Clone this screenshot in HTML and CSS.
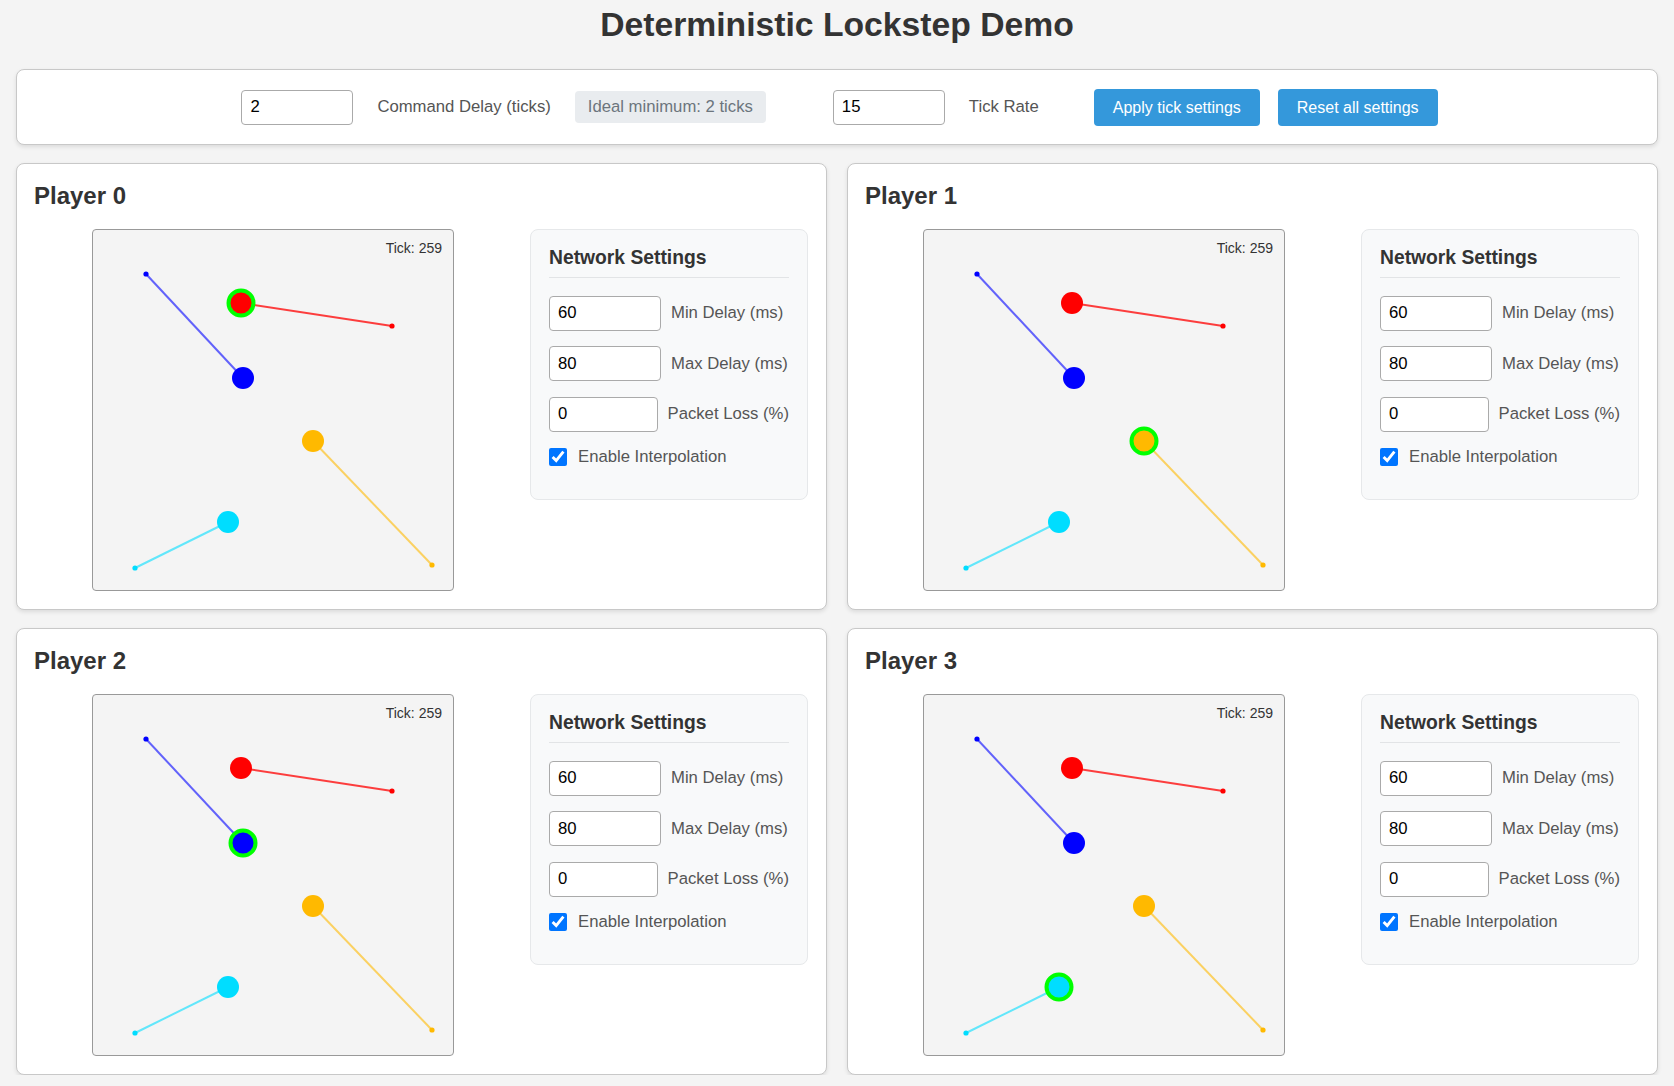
FILE: index.html
```html
<!DOCTYPE html>
<html lang="en">
<head>
<meta charset="utf-8">
<title>Deterministic Lockstep Demo</title>
<link rel="stylesheet" href="styles.css">
</head>
<body>
<h1 class="title">Deterministic Lockstep Demo</h1>

<div class="toolbar">
  <div class="group g1">
    <input class="field" type="text" value="2">
    <span class="lbl">Command Delay (ticks)</span>
    <span class="badge">Ideal minimum: 2 ticks</span>
  </div>
  <div class="group g2">
    <input class="field" type="text" value="15">
    <span class="lbl">Tick Rate</span>
  </div>
  <div class="group g3">
    <button class="btn">Apply tick settings</button>
    <button class="btn">Reset all settings</button>
  </div>
</div>

<div class="grid">
  <!-- Player 0 -->
  <section class="card">
    <h2 class="card-title">Player 0</h2>
    <div class="card-body">
      <div class="canvas-col">
        <svg class="world" width="360" height="360" viewBox="0 0 360 360">
          <line x1="53" y1="44" x2="150" y2="148" stroke="#0000ff" stroke-opacity="0.6" stroke-width="2"/>
          <line x1="299" y1="96" x2="148" y2="73" stroke="#ff0000" stroke-opacity="0.75" stroke-width="2"/>
          <line x1="339" y1="335" x2="220" y2="211" stroke="#ffb900" stroke-opacity="0.6" stroke-width="2"/>
          <line x1="42" y1="338" x2="135" y2="292" stroke="#00ddff" stroke-opacity="0.6" stroke-width="2"/>
          <circle cx="53" cy="44" r="2.6" fill="#0000ff"/>
          <circle cx="299" cy="96" r="2.6" fill="#ff0000"/>
          <circle cx="339" cy="335" r="2.6" fill="#ffb900"/>
          <circle cx="42" cy="338" r="2.6" fill="#00ddff"/>
          <circle cx="150" cy="148" r="11" fill="#0000ff"/>
          <circle cx="148" cy="73" r="12.5" fill="#ff0000" stroke="#00ff00" stroke-width="4"/>
          <circle cx="220" cy="211" r="11" fill="#ffb900"/>
          <circle cx="135" cy="292" r="11" fill="#00ddff"/>
          <text class="tick" x="349" y="23" text-anchor="end">Tick: 259</text>
        </svg>
      </div>
      <div class="net">
        <h3 class="net-title">Network Settings</h3>
        <div class="row"><input class="field" type="text" value="60"><span class="lbl">Min Delay (ms)</span></div>
        <div class="row"><input class="field" type="text" value="80"><span class="lbl">Max Delay (ms)</span></div>
        <div class="row"><input class="field" type="text" value="0"><span class="lbl">Packet Loss (%)</span></div>
        <label class="row check"><input class="cb" type="checkbox" checked><span class="lbl">Enable Interpolation</span></label>
      </div>
    </div>
  </section>

  <!-- Player 1 -->
  <section class="card">
    <h2 class="card-title">Player 1</h2>
    <div class="card-body">
      <div class="canvas-col">
        <svg class="world" width="360" height="360" viewBox="0 0 360 360">
          <line x1="53" y1="44" x2="150" y2="148" stroke="#0000ff" stroke-opacity="0.6" stroke-width="2"/>
          <line x1="299" y1="96" x2="148" y2="73" stroke="#ff0000" stroke-opacity="0.75" stroke-width="2"/>
          <line x1="339" y1="335" x2="220" y2="211" stroke="#ffb900" stroke-opacity="0.6" stroke-width="2"/>
          <line x1="42" y1="338" x2="135" y2="292" stroke="#00ddff" stroke-opacity="0.6" stroke-width="2"/>
          <circle cx="53" cy="44" r="2.6" fill="#0000ff"/>
          <circle cx="299" cy="96" r="2.6" fill="#ff0000"/>
          <circle cx="339" cy="335" r="2.6" fill="#ffb900"/>
          <circle cx="42" cy="338" r="2.6" fill="#00ddff"/>
          <circle cx="150" cy="148" r="11" fill="#0000ff"/>
          <circle cx="148" cy="73" r="11" fill="#ff0000"/>
          <circle cx="220" cy="211" r="12.5" fill="#ffb900" stroke="#00ff00" stroke-width="4"/>
          <circle cx="135" cy="292" r="11" fill="#00ddff"/>
          <text class="tick" x="349" y="23" text-anchor="end">Tick: 259</text>
        </svg>
      </div>
      <div class="net">
        <h3 class="net-title">Network Settings</h3>
        <div class="row"><input class="field" type="text" value="60"><span class="lbl">Min Delay (ms)</span></div>
        <div class="row"><input class="field" type="text" value="80"><span class="lbl">Max Delay (ms)</span></div>
        <div class="row"><input class="field" type="text" value="0"><span class="lbl">Packet Loss (%)</span></div>
        <label class="row check"><input class="cb" type="checkbox" checked><span class="lbl">Enable Interpolation</span></label>
      </div>
    </div>
  </section>

  <!-- Player 2 -->
  <section class="card">
    <h2 class="card-title">Player 2</h2>
    <div class="card-body">
      <div class="canvas-col">
        <svg class="world" width="360" height="360" viewBox="0 0 360 360">
          <line x1="53" y1="44" x2="150" y2="148" stroke="#0000ff" stroke-opacity="0.6" stroke-width="2"/>
          <line x1="299" y1="96" x2="148" y2="73" stroke="#ff0000" stroke-opacity="0.75" stroke-width="2"/>
          <line x1="339" y1="335" x2="220" y2="211" stroke="#ffb900" stroke-opacity="0.6" stroke-width="2"/>
          <line x1="42" y1="338" x2="135" y2="292" stroke="#00ddff" stroke-opacity="0.6" stroke-width="2"/>
          <circle cx="53" cy="44" r="2.6" fill="#0000ff"/>
          <circle cx="299" cy="96" r="2.6" fill="#ff0000"/>
          <circle cx="339" cy="335" r="2.6" fill="#ffb900"/>
          <circle cx="42" cy="338" r="2.6" fill="#00ddff"/>
          <circle cx="150" cy="148" r="12.5" fill="#0000ff" stroke="#00ff00" stroke-width="4"/>
          <circle cx="148" cy="73" r="11" fill="#ff0000"/>
          <circle cx="220" cy="211" r="11" fill="#ffb900"/>
          <circle cx="135" cy="292" r="11" fill="#00ddff"/>
          <text class="tick" x="349" y="23" text-anchor="end">Tick: 259</text>
        </svg>
      </div>
      <div class="net">
        <h3 class="net-title">Network Settings</h3>
        <div class="row"><input class="field" type="text" value="60"><span class="lbl">Min Delay (ms)</span></div>
        <div class="row"><input class="field" type="text" value="80"><span class="lbl">Max Delay (ms)</span></div>
        <div class="row"><input class="field" type="text" value="0"><span class="lbl">Packet Loss (%)</span></div>
        <label class="row check"><input class="cb" type="checkbox" checked><span class="lbl">Enable Interpolation</span></label>
      </div>
    </div>
  </section>

  <!-- Player 3 -->
  <section class="card">
    <h2 class="card-title">Player 3</h2>
    <div class="card-body">
      <div class="canvas-col">
        <svg class="world" width="360" height="360" viewBox="0 0 360 360">
          <line x1="53" y1="44" x2="150" y2="148" stroke="#0000ff" stroke-opacity="0.6" stroke-width="2"/>
          <line x1="299" y1="96" x2="148" y2="73" stroke="#ff0000" stroke-opacity="0.75" stroke-width="2"/>
          <line x1="339" y1="335" x2="220" y2="211" stroke="#ffb900" stroke-opacity="0.6" stroke-width="2"/>
          <line x1="42" y1="338" x2="135" y2="292" stroke="#00ddff" stroke-opacity="0.6" stroke-width="2"/>
          <circle cx="53" cy="44" r="2.6" fill="#0000ff"/>
          <circle cx="299" cy="96" r="2.6" fill="#ff0000"/>
          <circle cx="339" cy="335" r="2.6" fill="#ffb900"/>
          <circle cx="42" cy="338" r="2.6" fill="#00ddff"/>
          <circle cx="150" cy="148" r="11" fill="#0000ff"/>
          <circle cx="148" cy="73" r="11" fill="#ff0000"/>
          <circle cx="220" cy="211" r="11" fill="#ffb900"/>
          <circle cx="135" cy="292" r="12.5" fill="#00ddff" stroke="#00ff00" stroke-width="4"/>
          <text class="tick" x="349" y="23" text-anchor="end">Tick: 259</text>
        </svg>
      </div>
      <div class="net">
        <h3 class="net-title">Network Settings</h3>
        <div class="row"><input class="field" type="text" value="60"><span class="lbl">Min Delay (ms)</span></div>
        <div class="row"><input class="field" type="text" value="80"><span class="lbl">Max Delay (ms)</span></div>
        <div class="row"><input class="field" type="text" value="0"><span class="lbl">Packet Loss (%)</span></div>
        <label class="row check"><input class="cb" type="checkbox" checked><span class="lbl">Enable Interpolation</span></label>
      </div>
    </div>
  </section>
</div>
</body>
</html>
```

FILE: styles.css
```css
* { box-sizing: border-box; }

body {
  margin: 0;
  padding: 0 16px;
  background: #f4f4f4;
  color: #333;
  font-family: "Liberation Sans", Arial, sans-serif;
  font-size: 16.7px;
}

.title {
  margin: 5px 0 25px;
  text-align: center;
  font-size: 33.7px;
  font-weight: bold;
  color: #333;
}

.toolbar {
  display: flex;
  align-items: center;
  justify-content: center;
  background: #fff;
  border: 1px solid #c8c8c8;
  border-radius: 8px;
  box-shadow: 0 2px 4px rgba(0,0,0,0.1);
  padding: 18.5px 0 18.5px 5px;
  margin-bottom: 17.5px;
}

.group {
  display: flex;
  align-items: center;
}
.g1 { gap: 24px; margin-right: 67px; }
.g2 { gap: 24px; margin-right: 55px; }
.g3 { gap: 18px; }

.field {
  width: 112px;
  min-width: 0;
  height: 35px;
  padding: 7px 8px;
  border: 1px solid #aaa;
  border-radius: 4px;
  background: #fff;
  font-family: "Liberation Sans", Arial, sans-serif;
  font-size: 16.7px;
  color: #000;
}

.lbl {
  color: #555;
  white-space: nowrap;
}

.badge {
  background: #e9ecef;
  color: #6c757d;
  border-radius: 4px;
  padding: 6px 13px;
  line-height: 19.7px;
  white-space: nowrap;
}

.btn {
  background: #3498db;
  color: #fff;
  border: none;
  border-radius: 4px;
  padding: 9px 19px;
  font-family: "Liberation Sans", Arial, sans-serif;
  font-size: 16px;
  line-height: 19.4px;
}

.grid {
  display: grid;
  grid-template-columns: 1fr 1fr;
  column-gap: 20px;
  row-gap: 18px;
}

.card {
  background: #fff;
  border: 1px solid #c8c8c8;
  border-radius: 8px;
  box-shadow: 0 2px 4px rgba(0,0,0,0.1);
  padding: 18px 16px 18px 17px;
}

.card-title {
  margin: 0 0 19px;
  font-size: 24px;
  font-weight: bold;
  color: #333;
}

.card-body {
  display: flex;
  align-items: flex-start;
  gap: 18px;
}

.canvas-col {
  flex: 1;
  display: flex;
  justify-content: center;
}

.world {
  display: block;
  background: #f4f4f4;
  border: 1px solid #999;
  border-radius: 4px;
  box-sizing: content-box;
}

.tick {
  font-family: "Liberation Sans", Arial, sans-serif;
  font-size: 14px;
  fill: #333;
}

.net {
  width: 278px;
  margin-right: 2px;
  background: #f8f9fa;
  border: 1px solid #e6e8ea;
  border-radius: 8px;
  padding: 17px 18px 16px;
}

.net-title {
  margin: 0 0 18px;
  padding-bottom: 8px;
  border-bottom: 1px solid #e2e4e6;
  font-size: 19.3px;
  font-weight: bold;
  color: #333;
}

.row {
  display: flex;
  align-items: center;
  gap: 10px;
  margin-bottom: 15.5px;
}

.check {
  gap: 11px;
}

.cb {
  width: 18px;
  height: 18px;
  margin: 0;
  accent-color: #0075ff;
}
```
